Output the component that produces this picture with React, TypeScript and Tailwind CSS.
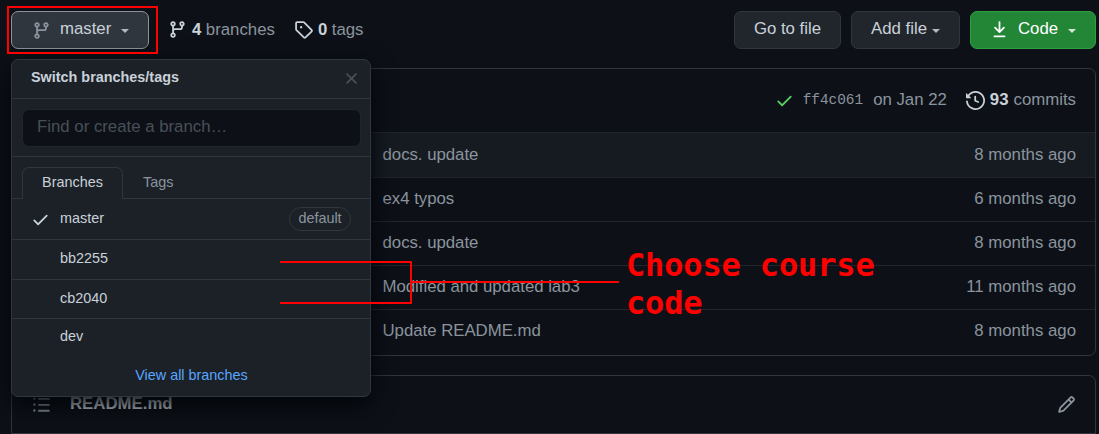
import React from 'react';

const icons = {
  branch:
    'M11.75 2.5a.75.75 0 100 1.5.75.75 0 000-1.5zm-2.25.75a2.25 2.25 0 113 2.122V6A2.5 2.5 0 0110 8.5H6a1 1 0 00-1 1v1.128a2.251 2.251 0 11-1.5 0V5.372a2.25 2.25 0 111.5 0v1.836A2.492 2.492 0 016 7h4a1 1 0 001-1v-.628A2.25 2.25 0 019.5 3.25zM4.25 12a.75.75 0 100 1.5.75.75 0 000-1.5zM3.5 3.25a.75.75 0 111.5 0 .75.75 0 01-1.5 0z',
  tag: 'M2.5 7.775V2.75a.25.25 0 01.25-.25h5.025a.25.25 0 01.177.073l6.25 6.25a.25.25 0 010 .354l-5.025 5.025a.25.25 0 01-.354 0l-6.25-6.25a.25.25 0 01-.073-.177zm-1.5 0V2.75C1 1.784 1.784 1 2.75 1h5.025c.464 0 .91.184 1.238.513l6.25 6.25a1.75 1.75 0 010 2.474l-5.026 5.026a1.75 1.75 0 01-2.474 0l-6.25-6.25A1.75 1.75 0 011 7.775zM6 5a1 1 0 100 2 1 1 0 000-2z',
  x: 'M3.72 3.72a.75.75 0 011.06 0L8 6.94l3.22-3.22a.75.75 0 111.06 1.06L9.06 8l3.22 3.22a.75.75 0 11-1.06 1.06L8 9.06l-3.22 3.22a.75.75 0 01-1.06-1.06L6.94 8 3.72 4.78a.75.75 0 010-1.06z',
  check:
    'M13.78 4.22a.75.75 0 010 1.06l-7.25 7.25a.75.75 0 01-1.06 0L2.22 9.28a.75.75 0 011.06-1.06L6 10.94l6.72-6.72a.75.75 0 011.06 0z',
  download:
    'M7.47 10.78a.75.75 0 001.06 0l3.75-3.75a.75.75 0 00-1.06-1.06L8.75 8.44V1.75a.75.75 0 00-1.5 0v6.69L4.78 5.97a.75.75 0 00-1.06 1.06l3.75 3.75zM3.75 13a.75.75 0 000 1.5h8.5a.75.75 0 000-1.5h-8.5z',
  history:
    'M1.643 3.143L.427 1.927A.25.25 0 000 2.104V5.75c0 .138.112.25.25.25h3.646a.25.25 0 00.177-.427L2.715 4.215a6.5 6.5 0 11-1.18 4.458.75.75 0 10-1.493.154 8.001 8.001 0 101.6-5.684zM7.75 4a.75.75 0 01.75.75v2.992l2.028.812a.75.75 0 01-.557 1.392l-2.5-1A.75.75 0 017 8.25v-3.5A.75.75 0 017.75 4z',
  list: 'M2 4a1 1 0 100-2 1 1 0 000 2zm3.75-1.5a.75.75 0 000 1.5h8.5a.75.75 0 000-1.5h-8.5zm0 5a.75.75 0 000 1.5h8.5a.75.75 0 000-1.5h-8.5zm0 5a.75.75 0 000 1.5h8.5a.75.75 0 000-1.5h-8.5zM3 8a1 1 0 11-2 0 1 1 0 012 0zm-1 6a1 1 0 100-2 1 1 0 000 2z',
  pencil:
    'M11.013 1.427a1.75 1.75 0 012.474 0l1.086 1.086a1.75 1.75 0 010 2.474l-8.61 8.61c-.21.21-.47.364-.756.445l-3.251.93a.75.75 0 01-.927-.928l.929-3.25a1.75 1.75 0 01.445-.758l8.61-8.61zm1.414 1.06a.25.25 0 00-.354 0L10.811 3.75l1.439 1.44 1.263-1.263a.25.25 0 000-.354l-1.086-1.086zM11.189 6.25L9.75 4.81l-6.286 6.287a.25.25 0 00-.064.108l-.558 1.953 1.953-.558a.249.249 0 00.108-.064l6.286-6.286z',
};

function Icon({ name, className = '' }: { name: keyof typeof icons; className?: string }) {
  return (
    <svg viewBox="0 0 16 16" className={`size-[19px] shrink-0 fill-current ${className}`} aria-hidden="true">
      <path fillRule="evenodd" d={icons[name]} />
    </svg>
  );
}

function Caret({ className = '' }: { className?: string }) {
  return (
    <svg viewBox="0 0 8 4" className={`mt-px h-1 w-2 shrink-0 fill-current ${className}`} aria-hidden="true">
      <path d="M0 0h8L4 4z" />
    </svg>
  );
}

const commits = [
  { message: 'docs. update', age: '8 months ago', size: 'h-[44px] bg-[#161b22]' },
  { message: 'ex4 typos', age: '6 months ago', size: 'h-[44px] border-t pb-[2px]' },
  { message: 'docs. update', age: '8 months ago', size: 'h-[44px] border-t pb-[2px]' },
  { message: 'Modified and updated lab3', age: '11 months ago', size: 'h-[44px] border-t pb-[2px]' },
  { message: 'Update README.md', age: '8 months ago', size: 'h-[44px] border-t pb-[2px]' },
];

const branches = [
  { name: 'master', current: true, size: 'h-[40px]' },
  { name: 'bb2255', current: false, size: 'h-[40px] border-t' },
  { name: 'cb2040', current: false, size: 'h-[39px] border-t' },
  { name: 'dev', current: false, size: 'h-[40px] border-t pb-[2px]' },
];

function Toolbar() {
  return (
    <header className="flex h-[38px] items-stretch">
      <button className="flex w-[138px] items-center rounded-[7px] border border-[#8b949e] bg-[#30363d] pl-5 text-[#c9d1d9]">
        <Icon name="branch" className="text-[#8b949e]" />
        <span className="mb-[3px] ml-[9px]">master</span>
        <Caret className="ml-[10px] text-[#b1b8bf]" />
      </button>
      <a className="ml-[19px] flex items-center text-[#c9d1d9]">
        <Icon name="branch" className="-mt-px" />
        <b className="ml-[5px]">4</b>
        <span className="ml-[4.5px] text-[#8b949e]">branches</span>
      </a>
      <a className="ml-[19.5px] flex items-center text-[#c9d1d9]">
        <Icon name="tag" className="-mt-px" />
        <b className="ml-[4.5px]">0</b>
        <span className="ml-[4.5px] text-[#8b949e]">tags</span>
      </a>
      <div className="ml-auto flex gap-[10px] text-[#c9d1d9]">
        <button className="w-[107px] rounded-[7px] border border-[#30363d] bg-[#21262d] pb-[3px]">Go to file</button>
        <button className="flex w-[109px] items-center rounded-[7px] border border-[#30363d] bg-[#21262d] pl-[19px]">
          <span className="mb-[3px] whitespace-nowrap">Add file</span>
          <Caret className="ml-[5px] text-[#b1b8bf]" />
        </button>
        <button className="flex w-[126px] items-center rounded-[7px] border border-[#2ea043] bg-[#238636] pl-[19px] text-white">
          <Icon name="download" className="-mt-px" />
          <span className="mb-[3px] ml-[9px]">Code</span>
          <Caret className="ml-[10px] text-[#d3e7d7]" />
        </button>
      </div>
    </header>
  );
}

function CommitTable() {
  return (
    <section className="mt-[19px] h-[288px] rounded-[7px] border border-[#30363d] text-[#8b949e]">
      <div className="flex h-[64px] items-center justify-end border-b border-[#21262d] pr-[19px] pb-[2px]">
        <Icon name="check" className="mt-px text-[#56d364]" />
        <code className="ml-[9px] font-['Liberation_Mono',monospace] text-[14.4px]">ff4c061</code>
        <span className="ml-[10px]">on Jan 22</span>
        <Icon name="history" className="mt-[2px] ml-[19px] text-[#c9d1d9]" />
        <b className="ml-[5px] text-[#c9d1d9]">93</b>
        <span className="ml-[5px]">commits</span>
      </div>
      {commits.map((c, i) => (
        <div key={i} className={`flex items-center justify-between border-[#21262d] pr-[19px] pl-[370.5px] ${c.size}`}>
          <span className="tracking-[-0.02px]">{c.message}</span>
          <span>{c.age}</span>
        </div>
      ))}
    </section>
  );
}

function BranchMenu() {
  return (
    <div className="absolute top-[59px] left-[11px] h-[338px] w-[360px] rounded-[7px] border border-[#30363d] bg-[#1c2128] text-[14.4px] leading-[18px] text-[#c9d1d9] shadow-[0_8px_24px_#010409]">
      <div className="flex h-[39px] items-center justify-between border-b border-[#30363d] pr-[9px] pl-[19px]">
        <b className="mb-[5px]">Switch branches/tags</b>
        <Icon name="x" className="-mt-px text-[#484f58]" />
      </div>
      <div className="h-[58px] border-b border-[#30363d] pt-[10px] pr-[9px] pl-[10px]">
        <div className="h-[38px] rounded-[7px] border border-[#21262d] bg-[#0d1117] px-[14px] pt-[7px] text-[16.8px] leading-[20px] text-[#484f58]">
          Find or create a branch…
        </div>
      </div>
      <div className="flex h-[42px] items-end border-b border-[#30363d] pl-[10px]">
        <div className="-mb-px h-[32px] w-[101px] rounded-t-[7px] border border-b-0 border-[#30363d] bg-[#1c2128] pt-[5px] text-center">
          Branches
        </div>
        <div className="mb-[7px] ml-[20px] text-[#8b949e]">Tags</div>
      </div>
      {branches.map((b) => (
        <div key={b.name} className={`flex items-center border-[#30363d] pr-[19px] pl-[19px] ${b.size}`}>
          <Icon name="check" className={b.current ? 'mt-px' : 'invisible'} />
          <span className="mb-[3px] ml-[10px]">{b.name}</span>
          {b.current && (
            <span className="ml-auto flex h-6 w-[62px] items-center justify-center rounded-full border border-[#30363d] pb-[2px] text-[#8b949e]">
              default
            </span>
          )}
        </div>
      ))}
      <div className="pt-[8px] pl-px text-center text-[#58a6ff]">View all branches</div>
    </div>
  );
}

function Annotations() {
  return (
    <div className="absolute inset-0">
      <svg width="1099" height="434" viewBox="0 0 1099 434" fill="none" stroke="#ff0000" strokeWidth="2">
        <path d="M8 7H157V53H8zM280 262H411V303H280M411 282H619" />
      </svg>
      <p className="absolute top-[246px] left-[626px] w-[270px] font-['DejaVu_Sans_Mono',monospace] text-[32px] leading-[38px] font-bold tracking-[-0.15px] text-[#ff0000]">
        Choose course code
      </p>
    </div>
  );
}

export default function App() {
  return (
    <main className="relative h-[434px] w-[1099px] overflow-hidden bg-[#0d1117] pt-[11px] pr-[3px] pl-[11px] font-['Liberation_Sans',sans-serif] text-[16.8px] leading-[22px]">
      <Toolbar />
      <CommitTable />
      <section className="mt-[19px] flex h-[59px] items-center rounded-t-[7px] border border-[#30363d] pr-[19px] pl-[20px] text-[#8b949e]">
        <Icon name="list" />
        <b className="mb-[2px] ml-[19px] text-[#c9d1d9]">README.md</b>
        <Icon name="pencil" className="ml-auto" />
      </section>
      <BranchMenu />
      <Annotations />
    </main>
  );
}
